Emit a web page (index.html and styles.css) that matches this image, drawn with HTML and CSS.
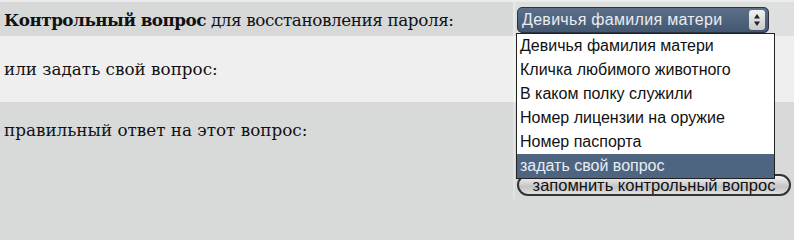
FILE: index.html
```html
<!DOCTYPE html>
<html lang="ru">
<head>
<meta charset="utf-8">
<link rel="stylesheet" href="styles.css">
</head>
<body>
<div class="form">
  <div class="row row-head">
    <div class="label"><span class="tight"><b>Контрольный вопрос</b> для восстановления пароля:</span></div>
    <div class="field">
      <div class="select">
        <span class="select-text">Девичья фамилия матери</span>
        <span class="spinner">
          <svg width="8" height="14" viewBox="0 0 8 14"><path d="M4 1 L7 5.5 H1 Z M4 13 L7 8.5 H1 Z" fill="#222"/></svg>
        </span>
      </div>
    </div>
  </div>
  <div class="row row-light">
    <div class="label"><span>или задать свой вопрос:</span></div>
    <div class="field"></div>
  </div>
  <div class="row row-answer">
    <div class="label"><span>правильный ответ на этот вопрос:</span></div>
    <div class="field field-bottom">
      <button class="btn">запомнить контрольный вопрос</button>
    </div>
  </div>
  <ul class="menu">
    <li>Девичья фамилия матери</li>
    <li>Кличка любимого животного</li>
    <li>В каком полку служили</li>
    <li>Номер лицензии на оружие</li>
    <li>Номер паспорта</li>
    <li class="active">задать свой вопрос</li>
  </ul>
</div>
</body>
</html>
```
FILE: styles.css
```css
html, body {
  margin: 0;
  padding: 0;
  background: #d8d9d9;
}
.form {
  position: relative;
  width: 794px;
  height: 200px;
  overflow: hidden;
  display: flex;
  flex-direction: column;
  border-top: 2px solid #ececec;
  box-sizing: border-box;
  font-family: "DejaVu Serif", "Liberation Serif", serif;
  font-size: 16.8px;
  color: #111;
}
.row {
  display: grid;
  grid-template-columns: 513px 1fr;
}
.row-head {
  height: 34px;
  background: #d7d8d8;
}
.row-head .field {
  background: #dedfdf;
  border-left: 2px solid #e8e8e8;
}
.row-light {
  height: 66px;
  background: #efefef;
}
.row-light .field {
  border-left: 2px solid #f4f4f4;
}
.row-answer {
  flex: 1;
  background: #d8d9d9;
}
.row-answer .field {
  border-left: 2px solid #e2e2e2;
}
.label {
  padding-left: 4px;
  display: flex;
  align-items: center;
  white-space: nowrap;
}
.row-head .label {
  padding-top: 1px;
}
.tight {
  letter-spacing: -0.4px;
}
.tight b {
  letter-spacing: -0.5px;
}
.row-answer .label {
  align-items: flex-start;
  padding-top: 18px;
}
.field {
  display: flex;
  align-items: center;
}
.select {
  margin-left: 2px;
  margin-top: 2px;
  width: 252px;
  height: 26px;
  box-sizing: border-box;
  border: 1px solid #2a3340;
  border-radius: 5px;
  background: linear-gradient(#5d7089, #445770);
  display: flex;
  align-items: center;
  justify-content: space-between;
  padding: 0 3px 0 4px;
  font-family: "Liberation Sans", Arial, sans-serif;
  font-size: 16px;
  color: #e9edf2;
}
.select-text {
  letter-spacing: 0.3px;
}
.spinner {
  width: 16px;
  height: 20px;
  border-radius: 3px;
  background: linear-gradient(#f2f2f2, #c9c9c9);
  display: flex;
  align-items: center;
  justify-content: center;
}
.field-bottom {
  align-items: flex-end;
  padding-bottom: 4px;
}
.btn {
  margin-left: 2px;
  width: 274px;
  height: 22px;
  border: 2px solid #333;
  border-radius: 11px;
  background: linear-gradient(#f4f4f4, #c4c4c4 60%, #e0e0e0);
  font-family: "Liberation Sans", Arial, sans-serif;
  font-size: 16.5px;
  color: #111;
  padding: 0;
  line-height: 16px;
}
.menu {
  position: absolute;
  left: 516px;
  top: 31px;
  width: 259px;
  margin: 0;
  padding: 0;
  list-style: none;
  background: #fff;
  border: 1px solid #222;
  box-sizing: border-box;
  font-family: "Liberation Sans", Arial, sans-serif;
  font-size: 16px;
  color: #111;
}
.menu li {
  height: 24px;
  line-height: 24px;
  padding-left: 3px;
}
.menu li.active {
  background: #4d6580;
  color: #e8edf3;
}
```
